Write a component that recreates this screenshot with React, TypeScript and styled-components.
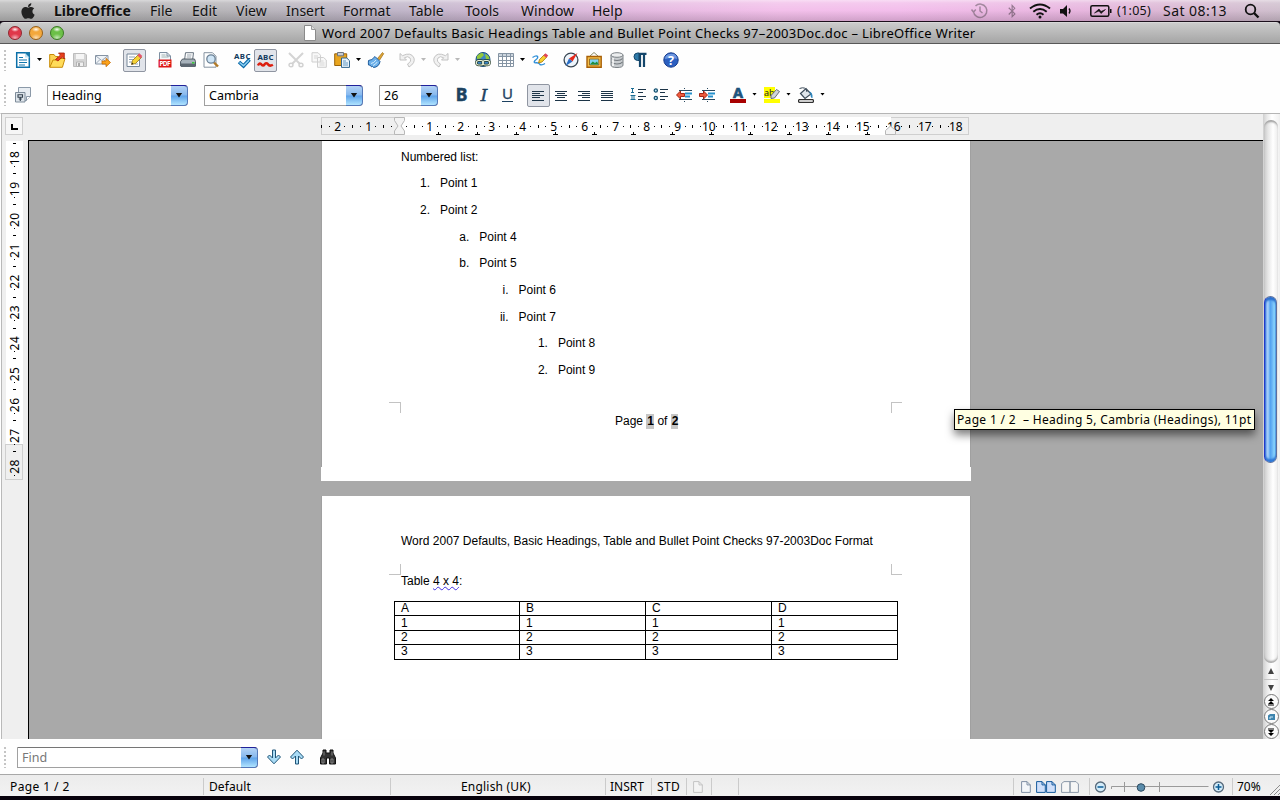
import React from "react";
import styled, { createGlobalStyle, css } from 'styled-components';
import { FaApple, FaBluetoothB } from "react-icons/fa";

const GlobalStyle = createGlobalStyle`
    * {
        box-sizing: border-box;
    }
    body {
        margin: 0;
        background: #08020c;
        overflow: hidden;
    }
    svg {
        display: block;
        flex: none;
        overflow: visible;
    }
`;

const uiFont = `"Noto Sans", "Open Sans", sans-serif`;

const Screen = styled.div`
    width: 1280px;
    height: 800px;
    display: flex;
    flex-direction: column;
    font-family: ${uiFont};
    font-size: 12px;
    color: #000;
    white-space: pre;
    overflow: hidden;
`;

/* ---------- menu bar ---------- */

const MenuBar = styled.div`
    height: 22px;
    flex: none;
    display: flex;
    align-items: center;
    padding-left: 19px;
    border-bottom: 1px solid #1c0f1c;
    background:
        linear-gradient(to bottom, rgba(255,255,255,.5) 0, rgba(255,255,255,.22) 3px, rgba(255,255,255,.05) 50%, rgba(0,0,0,.14) 100%),
        linear-gradient(to right, #b4b4b4 0, #b3b1b5 220px, #bdb2c6 400px, #d0b5d3 520px, #e3b7df 640px, #f2bde9 780px, #f2baea 900px, #e6b2dd 1080px, #d9b4d2 1170px, #cdbccb 1280px);
`;

const MenuItem = styled.span<{ $w: number; $bold?: boolean }>`
    width: ${p => p.$w}px;
    flex: none;
    font-size: 14px;
    line-height: 20px;
    font-weight: ${p => (p.$bold ? 700 : 400)};
    color: #111;
    text-shadow: 0 1px 0 rgba(255,255,255,.25);
`;

const AppleSlot = styled.div`
    width: 35px;
    display: flex;
`;

const MenuExtras = styled.div`
    margin-left: auto;
    width: 309px;
    flex: none;
    display: flex;
    align-items: center;
    color: #111;
`;

const Extra = styled.div<{ $w: number; $size?: number; $faded?: boolean; $ls?: number }>`
    width: ${p => p.$w}px;
    flex: none;
    font-size: ${p => p.$size || 14}px;
    line-height: 20px;
    letter-spacing: ${p => p.$ls || 0}px;
    opacity: ${p => (p.$faded ? 0.4 : 1)};
`;

/* ---------- window frame ---------- */

const TitleBar = styled.div`
    height: 22px;
    flex: none;
    display: flex;
    align-items: center;
    padding-left: 8px;
    border-radius: 4px 4px 0 0;
    border-top: 1px solid #d8d8d8;
    border-bottom: 1px solid #585858;
    background: linear-gradient(to bottom, #cbcbcb, #a5a5a5);
`;

const Light = styled.span<{ $c: string; $rim: string }>`
    width: 14px;
    height: 14px;
    margin-right: 7px;
    flex: none;
    border-radius: 50%;
    border: 1px solid ${p => p.$rim};
    background:
        radial-gradient(ellipse 4px 2.5px at 50% 20%, rgba(255,255,255,.95), rgba(255,255,255,0)),
        radial-gradient(ellipse 5px 4px at 50% 90%, rgba(255,255,255,.6), rgba(255,255,255,0)),
        ${p => p.$c};
`;

const Title = styled.div`
    display: flex;
    align-items: center;
    gap: 6px;
    margin-left: 233px;
    font-size: 13px;
    letter-spacing: .3px;
    line-height: 20px;
`;

const Toolbar = styled.div<{ $h: number; $pt?: number; $pb?: number }>`
    height: ${p => p.$h}px;
    flex: none;
    display: flex;
    align-items: center;
    padding-top: ${p => p.$pt || 0}px;
    padding-bottom: ${p => p.$pb || 0}px;
    background: #fefefe;
`;

const Grip = styled.div`
    width: 2px;
    height: 21px;
    margin: 0 6px 0 4px;
    flex: none;
    background: repeating-linear-gradient(to bottom, #c4c4c4 0 2px, transparent 2px 4px);
`;

const Slot = styled.div<{ $on?: boolean; $off?: boolean }>`
    width: 23px;
    height: 23px;
    flex: none;
    padding: 3px;
    svg {
        opacity: ${p => (p.$off ? 0.75 : 1)};
    }
    ${p => p.$on && css`
        padding: 2px;
        border: 1px solid #8f95a1;
        border-radius: 2px;
        background: #e1e4ea;
    `}
`;

const Sep = styled.div<{ $w?: number }>`
    width: ${p => p.$w || 8}px;
    flex: none;
`;

const Drop = styled.div<{ $off?: boolean }>`
    width: 11px;
    flex: none;
    &::before {
        content: '';
        display: block;
        margin: -2px 0 0 2px;
        width: 5px;
        height: 3px;
        clip-path: polygon(0 0, 100% 0, 50% 100%);
        background: ${p => (p.$off ? '#b8b8b8' : '#000')};
    }
`;

const Combo = styled.div<{ $w: number; $muted?: boolean }>`
    width: ${p => p.$w}px;
    height: 21px;
    flex: none;
    display: flex;
    font-size: 12.5px;
    line-height: 19px;
    color: ${p => (p.$muted ? '#777' : '#000')};
    border: 1px solid #a0a0a0;
    border-top-color: #757575;
    border-right: 0;
    border-radius: 0 4px 4px 0;
    background: #fff;
    padding-left: 4px;
`;

const ComboButton = styled.span`
    width: 17px;
    height: 21px;
    margin: -1px 0 0 auto;
    flex: none;
    display: flex;
    align-items: center;
    justify-content: center;
    border: 1px solid #5478b8;
    border-top-color: #21219a;
    border-left: 0;
    border-radius: 0 4px 4px 0;
    background: linear-gradient(to bottom, #b4d3f5 0, #86b8ee 48%, #5ea3ea 52%, #b0e4ff 100%);
    &::before {
        content: '';
        width: 7px;
        height: 5px;
        clip-path: polygon(0 0, 100% 0, 50% 100%);
        background: #111;
    }
`;

/* ---------- work area ---------- */

const Work = styled.div`
    height: 626px;
    flex: none;
    display: flex;
    border-left: 1px solid #fff;
    border-top: 1px solid #b5b5b5;
    background: #efefef;
`;

const LeftRail = styled.div`
    width: 27px;
    flex: none;
    border-left: 1px solid #b9b9b9;
    padding: 3px 0 0 3px;
    overflow: hidden;
`;

const TabBox = styled.div`
    width: 18px;
    height: 18px;
    border: 1px solid #cfcfcf;
    background: #f6f6f6;
    margin-bottom: 6px;
    svg {
        margin: 6px 0 0 5px;
    }
`;

const Centre = styled.div`
    width: 1235px;
    flex: none;
    display: flex;
    flex-direction: column;
`;

const RulerRow = styled.div`
    height: 25px;
    flex: none;
    padding: 3px 0 0 293px;
`;

const Canvas = styled.div`
    flex: 1;
    position: relative;
    overflow: hidden;
    border-top: 1px solid #000;
    border-left: 1px solid #000;
    background: #a9a9a9;
    padding-left: 292px;
    margin-top: 1px;
    font-family: "Liberation Sans", Arial, sans-serif;
    font-size: 12px;
`;

const Page = styled.div<{ $h: number; $pt: number; $gap?: number }>`
    width: 650px;
    height: ${p => p.$h}px;
    margin-bottom: ${p => p.$gap || 0}px;
    background: #fff;
    border-left: 1px solid #a0a0a0;
    border-right: 1px solid #a0a0a0;
    padding: ${p => p.$pt}px 0 0 79px;
    line-height: 14px;
`;

const Intro = styled.div`
    height: 26px;
    padding-top: 6px;
`;

const ListRow = styled.div<{ $level: number }>`
    height: 26.67px;
    display: flex;
    align-items: center;
    gap: 10px;
    padding-left: ${p => p.$level * 39.3}px;
    span:first-child {
        width: 29px;
        text-align: right;
    }
`;

const Crops = styled.div<{ $mt: number; $flip?: boolean }>`
    display: flex;
    justify-content: space-between;
    width: 513px;
    margin: ${p => p.$mt}px 0 0 -12px;
    i {
        width: 12px;
        height: 11px;
        border: 0 solid #c3c3c3;
        border-right-width: 1px;
        ${p => (p.$flip ? 'border-bottom-width: 1px;' : 'border-top-width: 1px;')}
    }
    i:last-child {
        width: 11px;
        border-right-width: 0;
        border-left-width: 1px;
    }
`;

const PageNumber = styled.div`
    margin: 1px 0 0 214px;
    display: flex;
    line-height: 15px;
    b {
        background: #c6c6c6;
        padding: 0 0 0 1px;
    }
`;

// the last strip of the sheet is painted one pixel wider on both sides
const PageFoot = styled.div`
    height: 14px;
    width: 650px;
    margin: 38px 0 0 -80px;
    background: #fff;
`;

const Heading = styled.div`
    margin-top: -1px;
`;

const Wavy = styled.span`
    text-decoration: underline wavy #4030e0 1px;
    text-underline-offset: 1px;
    text-decoration-skip-ink: none;
`;

const DocTable = styled.table`
    margin: 13px 0 0 -7px;
    width: 504px;
    border-collapse: collapse;
    table-layout: fixed;
    td {
        height: 14.4px;
        border: 1px solid #000;
        padding: 0 0 0 6px;
        line-height: 13px;
    }
    td:first-child {
        width: 125px;
    }
`;

const Tooltip = styled.div`
    position: absolute;
    left: 925px;
    top: 268px;
    width: 301px;
    height: 21px;
    border: 1px solid #000;
    background: #ffffe2;
    padding-left: 2px;
    font-family: ${uiFont};
    font-size: 12px;
    letter-spacing: .33px;
    line-height: 19px;
    box-shadow: 0 5px 9px rgba(0,0,0,.5);
`;

const ScrollRail = styled.div`
    width: 16px;
    flex: none;
    display: flex;
    flex-direction: column;
    align-items: center;
    background: linear-gradient(to right, #cfcfcf 0, #e9e9e9 4px, #fff 9px, #f2f2f2 100%);
`;

const Track = styled.div`
    width: 14px;
    height: 543px;
    margin-top: 6px;
    flex: none;
    border-radius: 7px;
    background: linear-gradient(to right, #c9c9c9 0, #e6e6e6 4px, #fff 9px, #ececec 100%);
    box-shadow: inset 0 3px 2px -1px #a0a0a0, inset 0 -3px 2px -1px #a8a8a8;
`;

const Thumb = styled.div`
    height: 167px;
    width: 13px;
    margin: 176px 0 0 0;
    border-radius: 7px;
    border: 1px solid #5c6f9e;
    border-left-color: #2338c8;
    background: linear-gradient(to right, #3f6fe0 0, #a9d0f8 2px, #8dc3f6 4px, #4ea0f0 5px, #67b2f4 7px, #93e0ff 10px, #62aef0 100%);
    box-shadow: inset 0 3px 2px #2b6fce, inset 0 -3px 2px #2f78d6;
`;

const RoundButton = styled.div`
    width: 15px;
    height: 15px;
    flex: none;
    display: flex;
    align-items: center;
    justify-content: center;
    border: 1.5px solid #777;
    border-radius: 50%;
    background: #fafafa;
`;

/* ---------- status bar ---------- */

const StatusBar = styled.div`
    height: 22px;
    flex: none;
    display: flex;
    align-items: center;
    padding-top: 2px;
    border-top: 1px solid #a8a8a8;
    background: linear-gradient(to bottom, #ececec, #f2f2f2);
`;

const Cell = styled.div<{ $w: number; $pl?: number; $noLine?: boolean; $ls?: number }>`
    width: ${p => p.$w}px;
    height: 17px;
    flex: none;
    display: flex;
    align-items: center;
    padding-left: ${p => p.$pl || 0}px;
    border-right: ${p => (p.$noLine ? 0 : 1)}px solid #cbcbcb;
    letter-spacing: ${p => p.$ls || 0}px;
    line-height: 17px;
`;

/* ---------- drawings ---------- */

const S = ({ children, w = 16, h = 16 }: { children: React.ReactNode; w?: number; h?: number }) => (
    <svg width={w} height={h} viewBox={`0 0 ${w} ${h}`} fill="none">{children}</svg>
);

const Glyph = styled.text<{ $size: number; $serif?: boolean; $italic?: boolean; $weight?: number }>`
    font-family: ${p => (p.$serif ? '"DejaVu Serif", "Liberation Serif", serif' : uiFont)};
    font-size: ${p => p.$size}px;
    font-weight: ${p => p.$weight || 700};
    font-style: ${p => (p.$italic ? 'italic' : 'normal')};
`;

const NewDoc = () => (
    <S>
        <path d="M1.700 .800H10L14.300 5v10.200H1.700z" fill="#fff" stroke="#0a6fa8" strokeWidth="1.500" />
        <path d="M9.500 0H15v6z" fill="#1a78a8" /><path d="M10 1v4.500h4.500z" fill="#bfe2f2" />
        <path d="M4 5.500h4M4 8h8M4 10.500h8M4 13h6" stroke="#1478ae" strokeWidth="1.200" />
    </S>
);
const OpenDoc = () => (
    <S>
        <path d="M.7 15.200V2.500H5l1.500 2H9v3" fill="#fbd455" stroke="#c88a06" />
        <path d="M.8 15.300 4 8h3l1.500-1.500H16l-2.600 8.800z" fill="#ffdc5a" stroke="#c98b08" />
        <path d="m6.500 7.500 5-4.500L9.500 1h5.800v6L13.300 5l-4.300 4z" fill="#e8401c" stroke="#a31b08" strokeWidth=".8" />
    </S>
);
const Save = () => (
    <S>
        <path d="M1.500 1.500h11.500l1.500 1.500v11.500h-13z" fill="#d5d5d5" stroke="#bcbcbc" />
        <path d="M4 2h8v5H4z" fill="#f5f5f5" /><path d="M4.500 10h7v4.500h-7z" fill="#f0f0f0" stroke="#b4b4b4" /><path d="M6 11h2v3H6z" fill="#aaa" />
    </S>
);
const Mail = () => (
    <S>
        <path d="M.5 3.500h12.500v8.500H.5z" fill="#f0f4f8" stroke="#8694a4" />
        <path d="m1 4 5.700 4.500L12.500 4M1 11.500l4-4M12 11 8.500 7.500" stroke="#8694a4" strokeWidth=".8" />
        <path d="M7 9h4V6.300l4.500 4.200-4.500 4.200V12H7z" fill="#fba31c" stroke="#c56b05" strokeWidth=".8" />
    </S>
);
const EditDoc = () => (
    <S>
        <path d="M1 2h12.500v12.500H1z" fill="#fff" stroke="#77889a" />
        <path d="M3 5h6M3 7.500h5M3 10h3M9 12h3" stroke="#8fa2b4" />
        <path d="m5.500 12.500 1-4L12.500 2.500l3 3-6 6z" fill="#f5d436" stroke="#987110" strokeWidth=".8" />
        <path d="m11.500 3.500 1.800-2.300 3 2.800-1.800 2.500z" fill="#e4566c" /><path d="m5.500 12.500.5-2 1.500 1.500z" fill="#222" />
    </S>
);
const Pdf = () => (
    <S>
        <path d="M2.500.5h7.500l3.500 3.500v8h-11z" fill="#f4f7fa" stroke="#7d8fa1" /><path d="M10 .5V4h3.500" stroke="#7d8fa1" />
        <path d="M4.500 3h4M4.500 5h7" stroke="#9aa" strokeWidth=".9" />
        <path d="M1.500 7.500h13v8h-13z" fill="#dd1616" />
        <Glyph x="2.500" y="14" $size={6.500} textLength="11" fill="#fff">PDF</Glyph>
    </S>
);
const Print = () => (
    <S>
        <path d="M4.500 8.500 5.500.7h8l-1 7.800z" fill="#fff" stroke="#66727e" /><path d="M7 3h4.500M6.700 5h4.500" stroke="#99a4ae" />
        <path d="M.6 9.500 2.500 7h12l1 2.500V14H.6z" fill="#a7b2bb" stroke="#4e5963" />
        <path d="M1 11.500h14.500V15H1z" fill="#5d6872" /><path d="M12 10h2.500v1.500H12z" fill="#3ccb3c" />
    </S>
);
const Preview = () => (
    <S>
        <path d="M1 .7h8.500l3.500 3.500v11H1z" fill="#fff" stroke="#8693a0" />
        <path d="m11 10.500 4 4" stroke="#b37a26" strokeWidth="2.400" />
        <circle cx="8" cy="7" r="4.200" fill="#cfe5f6" stroke="#6c8296" strokeWidth="1.300" />
    </S>
);
const Spell = () => (
    <S w={17} h={18}>
        <Glyph x="0" y="6.500" $size={7.800} fill="#10395c" textLength="16.500">ABC</Glyph>
        <path d="m5 10 4.500 4L15.500 7.500" stroke="#0a69a8" strokeWidth="3.600" /><path d="m5.500 10.500 4 3.200L15 8.300" stroke="#8cd0f4" strokeWidth="1.500" />
    </S>
);
const AutoSpell = () => (
    <S w={17}>
        <Glyph x="0.500" y="8" $size={7.800} fill="#10395c" textLength="16">ABC</Glyph>
        <path d="M1 13.500q1.300-3 3.200-1.300 1.700 2.800 3.500 0 1.700-1.700 3.200 0 1.700 2.500 5 .5" stroke="#dc1f10" strokeWidth="2.500" />
    </S>
);
const Cut = () => (
    <S>
        <path d="m1 1 10.500 10.500M15 1 4.500 11.500" stroke="#c6c6c6" strokeWidth="2" />
        <ellipse cx="3" cy="13" rx="2" ry="1.800" stroke="#c2c2c2" strokeWidth="1.400" /><ellipse cx="13" cy="13" rx="2" ry="1.800" stroke="#c2c2c2" strokeWidth="1.400" />
    </S>
);
const Copy = () => (
    <S>
        <path d="M1 .7h6l2.500 2.500V10H1zM6.500 5.500h6L15.300 8v7.300H6.500z" fill="#f6f6f6" stroke="#c0c0c0" />
        <path d="M3 4h4M3 6h3M8.500 9h4M8.500 11h5M8.500 13h5" stroke="#cacaca" />
    </S>
);
const Paste = () => (
    <S>
        <path d="M.7 1.800h12v11.700H.7z" fill="#e9a51e" stroke="#9c640a" /><path d="M3.500.5h6v3.300h-6z" fill="#c8ccd2" stroke="#6d7580" />
        <path d="M7.500 6h5.300l2.700 2.700v6.700h-8z" fill="#e9f3fb" stroke="#33668e" /><path d="M9 9h3M9 11h5M9 13h5" stroke="#5690bb" strokeWidth=".9" />
    </S>
);
const Brush = () => (
    <S>
        <path d="m9.500 6.500 5-6 1.200 1.200-4 6.300z" fill="#e0a637" stroke="#9b6b13" strokeWidth=".7" />
        <path d="M7 4.500 12 9.500q-1 5.500-6.500 6l-1-1.200-1 .6L2.200 13.200.5 13q-.3-2 0-4.500Q4 8.500 7 4.500z" fill="#6cb0ea" stroke="#1f5c9c" />
        <path d="M3 11.500q3-.5 5-3.500M5 13.500q3-1.200 4.200-3.500" stroke="#d3ebfb" />
    </S>
);
const Undo = ({ flip }: { flip?: boolean }) => (
    <S>
        <g transform={flip ? 'matrix(-1 0 0 1 16 0)' : undefined}>
            <path d="M1 1.500v6.500h6.500L5.300 5.800Q9 3.500 11 6q2 3.500-2.500 6L10 15q6.500-4 5-9Q12-.5 3.500 3.700z" fill="#f1f1f1" stroke="#bdbdbd" strokeWidth=".9" />
        </g>
    </S>
);
const Globe = () => (
    <S>
        <circle cx="8" cy="7.500" r="7" fill="#3c86c6" stroke="#1d527f" />
        <path d="M2 4q3-3.500 5.500-3L9 3 5.500 6.500 2 7zM10 2q4 1 4.500 5L11 7z" fill="#93c83a" />
        <rect x="1.300" y="8.500" width="7" height="4.500" rx="2.200" stroke="#233a28" strokeWidth="2.400" /><rect x="7.700" y="8.500" width="7" height="4.500" rx="2.200" stroke="#233a28" strokeWidth="2.400" />
        <rect x="1.300" y="8.500" width="7" height="4.500" rx="2.200" stroke="#e6efd9" strokeWidth="1.200" /><rect x="7.700" y="8.500" width="7" height="4.500" rx="2.200" stroke="#e6efd9" strokeWidth="1.200" />
    </S>
);
const Grid = () => (
    <S>
        <path d="M.5 1.500h15v13H.5z" fill="#fff" stroke="#8594a3" /><path d="M1 2h14v2.500H1z" fill="#ccd5de" />
        <path d="M.5 4.500h15M.5 8.500h15M.5 11.500h15M4.500 1.500v13M8.500 1.500v13M12.500 1.500v13" stroke="#8594a3" />
    </S>
);
const Draw = () => (
    <S>
        <path d="M.5 5.500q4-2.500 5-1t-2.500 4q-2 2.500 1 2.300t4 1.700q2 1 5-1" stroke="#2f8fd8" strokeWidth="1.400" />
        <path d="m6.500 11 1-3.500 5-5 2.500 2.300-5 5.200z" fill="#f8cf2e" stroke="#a67608" strokeWidth=".8" /><path d="m11.500 3.500 2-2.300 2.700 2.400-2 2.200z" fill="#e0455c" />
    </S>
);
const Compass = () => (
    <S>
        <circle cx="8" cy="8" r="6.900" fill="#eef5fb" stroke="#3a4754" strokeWidth="1.300" />
        <path d="M14.500 1 6 6.500 9.500 9.500z" fill="#e6271a" /><path d="M2.500 14 6 6.500 9.500 9.500z" fill="#2a6ec4" />
    </S>
);
const Gallery = () => (
    <S>
        <path d="m4 4 4-3.500L12 4" stroke="#8c8c66" /><path d="M1 4.500h14.200v10.700H1z" fill="#f3c04a" stroke="#a85f06" strokeWidth="1.400" />
        <path d="M3.500 7h9.300v6H3.500z" fill="#7fd4f2" stroke="#8f5b10" strokeWidth=".8" /><path d="m3.800 12.600 3-3L9 11l2-1.500 1.500 3.100z" fill="#1f8e3c" />
    </S>
);
const Database = () => (
    <S>
        <path d="M2 3v10q0 2.500 6 2.500t6-2.500V3" fill="#c9cdd0" stroke="#7b8186" />
        <path d="M2.500 6.500Q4 8.500 8 8.500t5.500-2M2.500 10Q4 12 8 12t5.500-2" stroke="#74797e" strokeWidth="1.200" />
        <path d="M4 6v8" stroke="#fff" strokeWidth="1.500" /><ellipse cx="8" cy="3" rx="6" ry="2.300" fill="#eceeef" stroke="#7b8186" />
    </S>
);
const Pilcrow = () => (
    <S>
        <path d="M7 1.800h7.500M8 2v13M12 2v13" stroke="#14466b" strokeWidth="2.200" /><path d="M7 1H5.500Q2 1.200 2 4.700T5.500 8.500H7z" fill="#2f7aa8" stroke="#14466b" />
    </S>
);
const Help = () => (
    <S>
        <circle cx="8" cy="8" r="7.200" fill="#2b5fc0" stroke="#173c8c" /><path d="M2 7q0-5 6-5.300T14 7q-5-2-12 0z" fill="#6d97e0" />
        <Glyph x="8" y="12.500" $size={12.500} textAnchor="middle" fill="#fff">?</Glyph>
    </S>
);
const Styles = () => (
    <S>
        <path d="M3.500.5h12v9l-4 4h-8z" fill="#e8edf2" stroke="#8b99a8" /><path d="M11.500 13.500v-4h4" fill="#fff" stroke="#8b99a8" />
        <path d="M.5 5.500h9.500v9.500H.5z" fill="#dde4ea" stroke="#7d8b99" /><path d="M3 7.800h4.500v2.400H3zM5.300 10v4M3.800 12h3" stroke="#34424f" strokeWidth="1.100" />
    </S>
);

const barTops = [4, 6, 8, 10, 13];

// one bar per text line: [x, width]
const Bars = ({ lines }: { lines: number[][] }) => (
    <S>
        {lines.map(([x, w], i) => <rect key={i} x={x} y={barTops[i]} width={w} height="1" fill="#1c3447" />)}
    </S>
);
const Numbered = () => (
    <S>
        <path d="M1 1.500h3M2.500 1.500v4M1 5.500h3M.5 8.500h5M2 8.500v4M4 8.500v4M.5 12.500h5" stroke="#1b6c93" />
        <path d="M8 2.500h8M8 5.500h5M8 9.500h8M8 12.500h5" stroke="#1c3447" />
    </S>
);
const Bulleted = () => (
    <S>
        <circle cx="2.800" cy="3.500" r="1.600" fill="#bde3f5" stroke="#14506f" strokeWidth="1.300" /><circle cx="2.800" cy="11" r="1.600" fill="#bde3f5" stroke="#14506f" strokeWidth="1.300" />
        <path d="M7 2.500h8M7 5.500h5M7 9.500h8M7 12.500h5" stroke="#1c3447" />
    </S>
);
const Indent = ({ inc }: { inc?: boolean }) => (
    <S>
        <path d="M8 1.500h1M3 3.500h13M3 12.500h13M8 14.500h1" stroke="#28485e" strokeWidth="1.200" /><path d="M9 6.500h7M9 9.500h5" stroke="#2490cc" strokeWidth="2" />
        <path d={inc ? 'M8.500 8 4.500 4v2.500H.5v3h4V12z' : 'M.5 8l4-4v2.500h4v3h-4V12z'} fill="#ef5a3c" stroke="#9b1606" strokeWidth=".9" />
    </S>
);
const FontColor = () => (
    <S>
        <Glyph x="8" y="11" $size={14.500} textAnchor="middle" fill="#1f5580" stroke="#174a72" strokeWidth=".6">A</Glyph>
        <path d="M0 12h16v4H0z" fill="#a80000" />
    </S>
);
const Highlight = () => (
    <S>
        <path d="M0 0h11v11H0zM0 12h16v4H0z" fill="#ffff00" />
        <Glyph x="0" y="8.500" $size={9} $weight={400} fill="#222">ab</Glyph>
        <path d="m7 8.500 5.500-6 3 2-5 6.500-3.500.5z" fill="#cfd4d9" stroke="#59626b" strokeWidth=".9" />
    </S>
);
const Fill = () => (
    <S>
        <path d="M2.500 6.500 8 1.500l5 5.500-6 4.500z" fill="#dfe5ea" stroke="#3b4a58" strokeWidth="1.200" /><path d="M1.500 1.500Q8-1 9 5" stroke="#3b4a58" />
        <path d="M11 4.500q4 .5 3.500 6.500-2 .5-2-4z" fill="#2f88c0" /><path d="M.7 12.700h14.600v2.600H.7z" fill="#fff" stroke="#000" />
    </S>
);
const Arrow = ({ up }: { up?: boolean }) => (
    <S>
        <path transform={up ? 'rotate(180 8 8)' : undefined} d="M6.500 1h3v8L12.500 6 14.500 8 8 14.800 1.500 8l2-2 3 3z" fill="#a9dbf5" stroke="#1f5578" />
    </S>
);
const Binoculars = () => (
    <S>
        <path d="M3 1h3v3h4V1h3v3l2.500 5v6H9.500V9h-3v6H.5V9L3 4z" fill="#333" stroke="#111" /><path d="M2 10h2v4H2zM11 10h2v4h-2zM4 2.500v4M12 2.500v4" stroke="#8a8a8a" strokeWidth=".9" />
    </S>
);

const SheetIcon = ({ c, fill }: { c: string; fill: string }) => (
    <S w={10} h={12}><path d="M.6.6h5.400l3.300 3.300v7.500H.6z" fill={fill} stroke={c} /><path d="M6 .6v3.300h3.300" stroke={c} /></S>
);

/* ---------- rulers ---------- */

const CM = 30.93;
const tabStops = Array.from({ length: 12 }, (_, i) => 117.5 + i * 39);

const HorizontalRuler = () => {
    const zero = 77.5;
    const marks = Array.from({ length: 83 }, (_, i) => i - 10);
    return (
        <svg width="648" height="21" viewBox="0 0 648 21" fontFamily={uiFont} fontSize="12">
            <rect x=".5" y=".5" width="647" height="17" fill="#efefef" stroke="#cfcfcf" />
            <rect x="78" y="0" width="492" height="18" fill="#fff" />
            {marks.map(q => {
                const x = Math.round(zero + (q * CM) / 4);
                if (x < 0 || x > 640 || q === 0) return null;
                if (q % 4 === 0) {
                    return <text key={q} x={x + 0.8} y="14" textAnchor="middle">{Math.abs(q / 4)}</text>;
                }
                const half = q % 2 === 0;
                return <rect key={q} x={x} y={half ? 8 : 9} width="1" height={half ? 3 : 1} fill="#000" />;
            })}
            {tabStops.map(x => (
                <path key={x} d={`M${x} 15v3M${x - 2.5} 17.500h5`} stroke="#000" fill="none" />
            ))}
            <path d="M73.500.5h10v3l-3.500 5.500 3.500 5v3.500h-10V14l3.500-5-3.500-5.500z" fill="#f3f3f3" stroke="#b8b8b8" />
            <path d="M564.500 17.500v-4l5-4.500 5 4.500v4z" fill="#f3f3f3" stroke="#b8b8b8" />
        </svg>
    );
};

const VerticalRuler = () => (
    <svg width="18" height="345" viewBox="0 0 18 345" fontFamily={uiFont} fontSize="12">
        <rect x="1" y="0" width="17" height="303" fill="#fff" />
        <rect x=".5" y="303.500" width="17" height="35" fill="#efefef" stroke="#cfcfcf" />
        {Array.from({ length: 11 }, (_, i) => {
            const y = 17 + i * 30.85;
            return (
                <g key={i}>
                    <rect x="8" y={Math.round(y - 15.500)} width="3" height="1" />
                    <rect x="9" y={Math.round(y + 8)} width="1" height="1" />
                    <text transform={`translate(14 ${y}) rotate(-90)`} textAnchor="middle" letterSpacing=".5">{18 + i}</text>
                </g>
            );
        })}
    </svg>
);

/* ---------- content ---------- */

const points: [number, string, string][] = [
    [0, '1.', 'Point 1'],
    [0, '2.', 'Point 2'],
    [1, 'a.', 'Point 4'],
    [1, 'b.', 'Point 5'],
    [2, 'i.', 'Point 6'],
    [2, 'ii.', 'Point 7'],
    [3, '1.', 'Point 8'],
    [3, '2.', 'Point 9'],
];

const tableRows = [
    ['A', 'B', 'C', 'D'],
    ['1', '1', '1', '1'],
    ['2', '2', '2', '2'],
    ['3', '3', '3', '3'],
];

const menus: [string, number][] = [
    ['File', 42], ['Edit', 44], ['View', 50], ['Insert', 57], ['Format', 66],
    ['Table', 56], ['Tools', 56], ['Window', 71], ['Help', 40],
];

const Menu = () => (
    <MenuBar>
        <AppleSlot><FaApple size={18} color="#222" /></AppleSlot>
        <MenuItem $w={96} $bold>LibreOffice</MenuItem>
        {menus.map(([label, w]) => <MenuItem key={label} $w={w}>{label}</MenuItem>)}
        <MenuExtras>
            <Extra $w={34} $faded>
                <S w={17} h={17}>
                    <path d="M2.500 9.500a6.700 6.700 0 1 0 2-5.500M.5 7.500l2 2.500 2.300-2.500M9 4.500V9l2.500 2" stroke="#333" strokeWidth="1.500" />
                </S>
            </Extra>
            <Extra $w={24} $faded><FaBluetoothB size={14} /></Extra>
            <Extra $w={31}>
                <S w={22} h={16}>
                    <path d="M1 5.500q10-8 20 0M4.300 8.700q6.700-5.300 13.400 0M7.500 11.700q3.500-2.800 7 0" stroke="#111" strokeWidth="2" /><circle cx="11" cy="14" r="1.500" fill="#111" />
                </S>
            </Extra>
            <Extra $w={30}>
                <S w={12} h={14}><path d="M0 5h3l4-4v12L3 9.500H0z" fill="#111" /><path d="M9 4.500q2 2.500 0 5" stroke="#111" strokeWidth="1.300" /></S>
            </Extra>
            <Extra $w={27}>
                <S w={22} h={12}>
                    <rect x=".8" y=".8" width="18" height="10.400" rx="1.500" stroke="#111" strokeWidth="1.500" /><path d="M20 4h1.500v4H20z" fill="#111" />
                    <path d="m4.500 8 4.500-4 2 2.500 4.500-2-4.500 4-2-2.500z" fill="#111" stroke="#111" strokeWidth=".6" />
                </S>
            </Extra>
            <Extra $w={46} $size={12.5} $ls={0.3}>(1:05)</Extra>
            <Extra $w={81} $ls={0.45}>Sat 08:13</Extra>
            <Extra $w={20}>
                <S><circle cx="6.500" cy="6.500" r="4.800" stroke="#111" strokeWidth="1.800" /><path d="m10 10 4.500 4.500" stroke="#111" strokeWidth="2.400" /></S>
            </Extra>
        </MenuExtras>
    </MenuBar>
);

const StandardBar = () => (
    <Toolbar $h={35} $pb={2}>
        <Grip />
        <Slot><NewDoc /></Slot><Drop />
        <Slot><OpenDoc /></Slot>
        <Slot><Save /></Slot>
        <Slot><Mail /></Slot>
        <Sep />
        <Slot $on><EditDoc /></Slot>
        <Sep />
        <Slot><Pdf /></Slot>
        <Slot><Print /></Slot>
        <Slot><Preview /></Slot>
        <Sep />
        <Slot><Spell /></Slot>
        <Slot $on><AutoSpell /></Slot>
        <Sep />
        <Slot $off><Cut /></Slot>
        <Slot $off><Copy /></Slot>
        <Slot><Paste /></Slot><Drop />
        <Slot><Brush /></Slot>
        <Sep />
        <Slot><Undo /></Slot><Drop $off />
        <Slot><Undo flip /></Slot><Drop $off />
        <Sep />
        <Slot><Globe /></Slot>
        <Slot><Grid /></Slot><Drop />
        <Slot><Draw /></Slot>
        <Sep />
        <Slot><Compass /></Slot>
        <Slot><Gallery /></Slot>
        <Slot><Database /></Slot>
        <Slot><Pilcrow /></Slot>
        <Sep />
        <Slot><Help /></Slot>
    </Toolbar>
);

const FormatBar = () => (
    <Toolbar $h={34} $pb={2}>
        <Grip />
        <Slot><Styles /></Slot>
        <Sep $w={12} />
        <Combo $w={141}>Heading<ComboButton /></Combo>
        <Sep $w={16} />
        <Combo $w={159}>Cambria<ComboButton /></Combo>
        <Sep $w={16} />
        <Combo $w={59}>26<ComboButton /></Combo>
        <Sep $w={12} />
        <Slot>
            <S><Glyph x="8.500" y="14" $size={17.5} textAnchor="middle" fill="#1d4261" stroke="#1d4261" strokeWidth=".5">B</Glyph></S>
        </Slot>
        <Slot>
            <S><Glyph x="8" y="14" $size={17.5} $serif $italic $weight={400} textAnchor="middle" fill="#1d4261" stroke="#1d4261" strokeWidth=".4">I</Glyph></S>
        </Slot>
        <Slot>
            <S>
                <Glyph x="8.500" y="12" $size={15} $weight={400} textAnchor="middle" fill="#1d4261" stroke="#1d4261" strokeWidth=".3">U</Glyph>
                <path d="M3 14.500h11" stroke="#1d4261" />
            </S>
        </Slot>
        <Sep />
        <Slot $on><Bars lines={[[2, 12], [2, 8], [2, 12], [2, 8], [2, 12]]} /></Slot>
        <Slot><Bars lines={[[2, 12], [4, 8], [2, 12], [4, 8], [2, 12]]} /></Slot>
        <Slot><Bars lines={[[2, 12], [6, 8], [2, 12], [6, 8], [2, 12]]} /></Slot>
        <Slot><Bars lines={[[2, 12], [2, 12], [2, 12], [2, 12], [2, 12]]} /></Slot>
        <Sep />
        <Slot><Numbered /></Slot>
        <Slot><Bulleted /></Slot>
        <Slot><Indent /></Slot>
        <Slot><Indent inc /></Slot>
        <Sep />
        <Slot><FontColor /></Slot><Drop />
        <Slot><Highlight /></Slot><Drop />
        <Slot><Fill /></Slot><Drop />
    </Toolbar>
);

const Document = () => (
    <Canvas>
        <Page $h={340} $pt={3} $gap={15}>
            <Intro>Numbered list:</Intro>
            {points.map(([level, mark, text]) => (
                <ListRow key={text} $level={level}><span>{mark}</span><span>{text}</span></ListRow>
            ))}
            <Crops $mt={18.5}><i /><i /></Crops>
            <PageNumber>Page <b>1</b> of <b>2</b></PageNumber>
            <PageFoot />
        </Page>
        <Page $h={243} $pt={38}>
            Word 2007 Defaults, Basic Headings, Table and Bullet Point Checks 97-2003Doc Format
            <Crops $mt={16} $flip><i /><i /></Crops>
            <Heading>Table <Wavy>4 x 4</Wavy>:</Heading>
            <DocTable>
                <tbody>
                    {tableRows.map(row => (
                        <tr key={row[0]}>{row.map((cell, i) => <td key={i}>{cell}</td>)}</tr>
                    ))}
                </tbody>
            </DocTable>
        </Page>
        <Tooltip>Page 1 / 2  – Heading 5, Cambria (Headings), 11pt</Tooltip>
    </Canvas>
);

const Scroll = () => (
    <ScrollRail>
        <Track><Thumb /></Track>
        <S w={16} h={31}>
            <path d="M5 11h6L8 5zM5 22h6l-3 6z" fill="#444" /><path d="M1 16.500h14" stroke="#c4c4c4" />
        </S>
        <RoundButton><S w={8} h={8}><path d="M4 0 7 3H1zM4 3l3 3H1z" fill="#000" /><path d="M1 7h6" stroke="#000" /></S></RoundButton>
        <RoundButton><S w={8} h={8}><path d="M1 2.500 3 1h5v6H1z" fill="#3d84ae" /><path d="M3 6V4h3" stroke="#cfe8f5" /></S></RoundButton>
        <RoundButton><S w={8} h={8}><path d="M1 1h6" stroke="#000" /><path d="M1 2h6L4 5zM1 5h6L4 8z" fill="#000" /></S></RoundButton>
    </ScrollRail>
);

const Status = () => (
    <StatusBar>
        <Cell $w={204} $pl={10} $ls={0.4}>Page 1 / 2</Cell>
        <Cell $w={187} $pl={5} $ls={0.1}>Default</Cell>
        <Cell $w={215} $pl={70} $ls={0.2}>English (UK)</Cell>
        <Cell $w={46} $pl={4}>INSRT</Cell>
        <Cell $w={35} $pl={5} $ls={0.4}>STD</Cell>
        <Cell $w={25} $pl={6}><SheetIcon c="#c4c4c4" fill="#f4f4f4" /></Cell>
        <Cell $w={27} />
        <Cell $w={275} />
        <Cell $w={76} $pl={7}>
            <SheetIcon c="#7f8fa5" fill="#f3f6fa" />
            <Sep $w={5} />
            <SheetIcon c="#155a9c" fill="#cfdffa" /><SheetIcon c="#155a9c" fill="#cfdffa" />
            <Sep $w={5} />
            <S w={18} h={12}><path d="M.6 2.500 3 .6h6v10.800H.6zM9 .6h6l2.400 2.400v8.400H9z" fill="#f6f6f6" stroke="#8b98a8" /></S>
        </Cell>
        <Cell $w={143} $pl={4}>
            <S w={134} h={14}>
                <circle cx="6.500" cy="7" r="5" fill="#d3ecfa" stroke="#56697a" strokeWidth="1.300" /><path d="M3.500 7h6" stroke="#0a5b94" strokeWidth="1.500" />
                <path d="M17.500 9V6.500h97M30.500 2v10M65.500 2v10" stroke="#9a9a9a" />
                <circle cx="47" cy="7.500" r="3.800" fill="#5a8cab" stroke="#2c4a60" />
                <circle cx="124.500" cy="7" r="5" fill="#d3ecfa" stroke="#56697a" strokeWidth="1.300" /><path d="M121.500 7h6M124.500 4v6" stroke="#0a5b94" strokeWidth="1.500" />
            </S>
        </Cell>
        <Cell $w={36} $pl={4} $noLine>70%</Cell>
        <S w={12} h={18}><path d="M1 17 12 6M5 17l7-7M9 17l3-3" stroke="#8e8e8e" /></S>
    </StatusBar>
);

const App = () => {
    return (
        <Screen>
            <GlobalStyle />
            <Menu />
            <TitleBar>
                <Light $c="#e0384a" $rim="#8e2a32" />
                <Light $c="#f3a83c" $rim="#95601c" />
                <Light $c="#6cc048" $rim="#3c7a26" />
                <Title>
                    <S w={12} h={16}><path d="M.5.5h7l4 4v11H.5z" fill="#fff" stroke="#8a8a8a" /><path d="M7.500.5v4h4" fill="#ddd" stroke="#9a9a9a" /></S>
                    Word 2007 Defaults Basic Headings Table and Bullet Point Checks 97–2003Doc.doc – LibreOffice Writer
                </Title>
            </TitleBar>
            <StandardBar />
            <FormatBar />
            <Work>
                <LeftRail>
                    <TabBox><S w={7} h={6}><path d="M1 0v5h6" stroke="#000" strokeWidth="2" /></S></TabBox>
                    <VerticalRuler />
                </LeftRail>
                <Centre>
                    <RulerRow><HorizontalRuler /></RulerRow>
                    <Document />
                </Centre>
                <Scroll />
            </Work>
            <Toolbar $h={35} $pt={1}>
                <Grip />
                <Sep $w={5} />
                <Combo $w={241} $muted>Find<ComboButton /></Combo>
                <Sep $w={5} />
                <Slot><Arrow /></Slot>
                <Slot><Arrow up /></Slot>
                <Sep />
                <Slot><Binoculars /></Slot>
            </Toolbar>
            <Status />
        </Screen>
    )
}

export default App;
